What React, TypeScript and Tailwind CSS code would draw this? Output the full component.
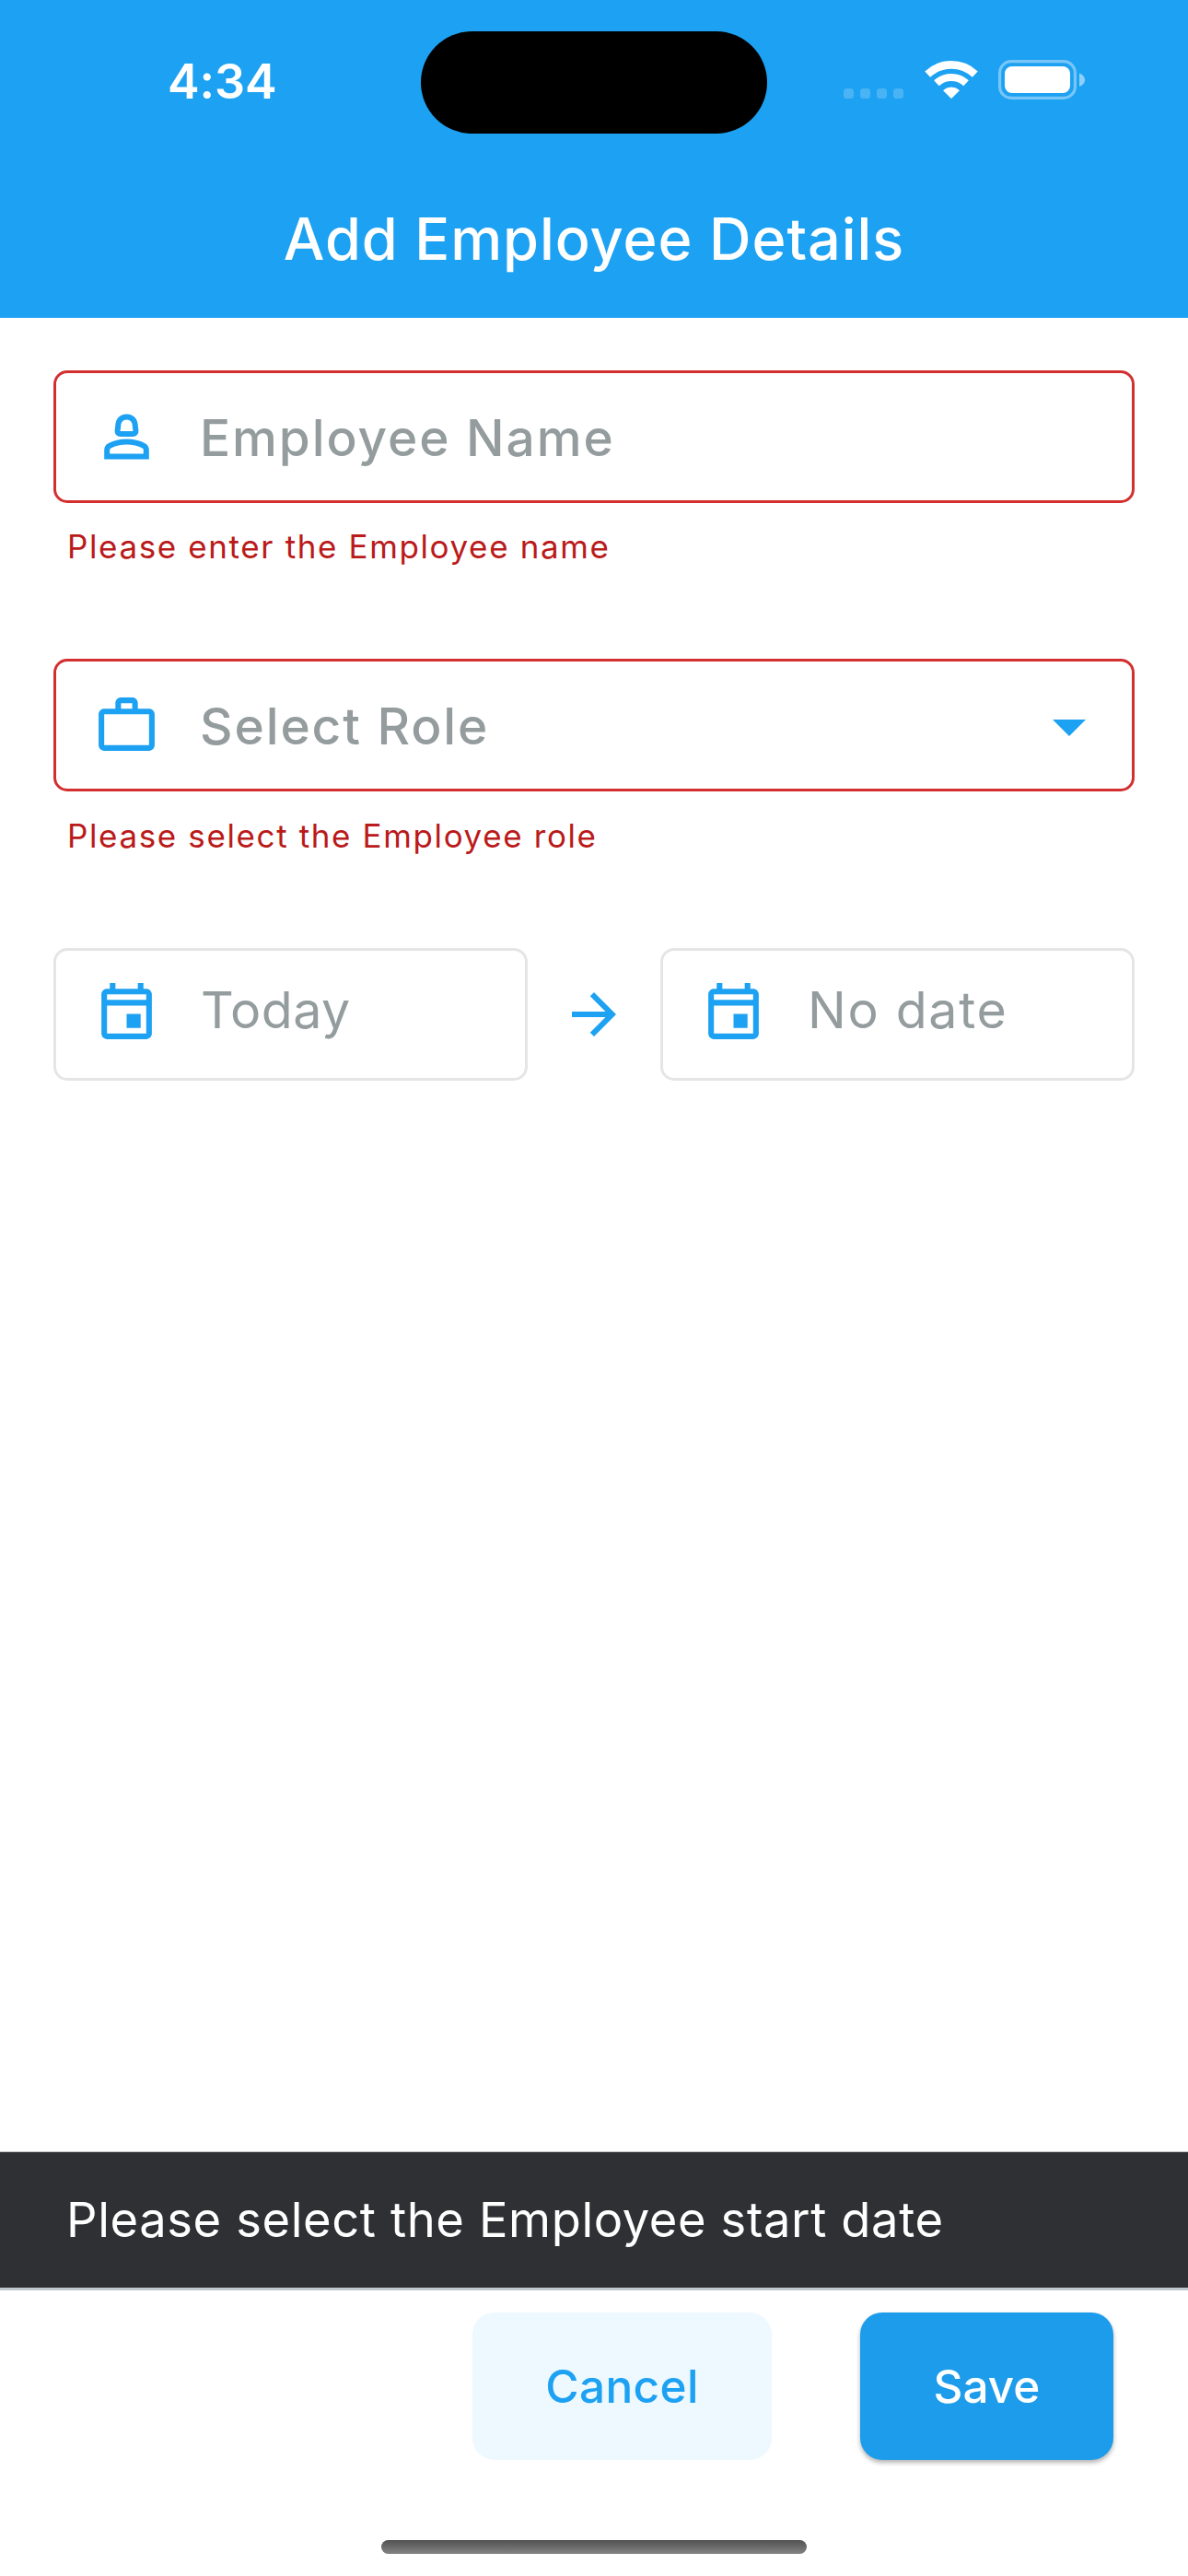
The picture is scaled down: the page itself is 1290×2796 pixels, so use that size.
import type { ReactNode } from "react";

function WifiIcon() {
  return (
    <svg width="58" height="43" viewBox="0 0 58 43" className="block" fill="none" stroke="#fff">
      <path d="M3.2 15.6A37.6 37.6 0 0 1 54.8 15.6" strokeWidth="8.6" />
      <path d="M12.9 25.3A23.7 23.7 0 0 1 45.1 25.3" strokeWidth="8.2" />
      <path
        d="M20.6 33.2A12.6 12.6 0 0 1 37.4 33.2L29 41.6Z"
        fill="#fff"
        strokeWidth="1"
        strokeLinejoin="round"
      />
    </svg>
  );
}

function BatteryIcon() {
  return (
    <svg width="94" height="43" viewBox="0 0 94 43" className="block">
      <rect x="1.6" y="1.6" width="81.8" height="39.8" rx="12.5" fill="none" stroke="#fff" strokeOpacity="0.4" strokeWidth="3.2" />
      <rect x="7" y="7" width="71" height="29" rx="8" fill="#fff" />
      <path d="M88 14.5c3.6 1.4 6 4 6 7.2s-2.4 5.8-6 7.2z" fill="#fff" fillOpacity="0.5" />
    </svg>
  );
}

function PersonIcon() {
  return (
    <svg width="73" height="73" viewBox="0 0 73 73" fill="none" stroke="#1DA1F2" strokeWidth="6" className="block shrink-0">
      <path d="M36.5 14.5c-6 0-9.3 4-9.3 10.5l-.6 4c-.3 2.8 1 4 3.4 4h13c2.4 0 3.7-1.2 3.4-4l-.6-4c0-6.5-3.3-10.5-9.3-10.5z" />
      <path d="M15.2 57.4v-6.9c0-2.100.9-3.700 2.700-4.700c5.600-3 12-4.300 18.600-4.300s13 1.300 18.600 4.300c1.800 1 2.700 2.600 2.700 4.700v6.900z" />
    </svg>
  );
}

function WorkIcon() {
  return (
    <svg width="73" height="73" viewBox="0 0 24 24" fill="#1DA1F2" className="block shrink-0">
      <path
        fillRule="evenodd"
        d="M14 6V4h-4v2h4zM4 8v11h16V8H4zm16-2c1.110 0 2 .89 2 2v11c0 1.110-.89 2-2 2H4c-1.110 0-2-.89-2-2V8c0-1.110.89-2 2-2h4V4c0-1.110.89-2 2-2h4c1.110 0 2 .89 2 2v2h4z"
      />
    </svg>
  );
}

function CalendarIcon() {
  return (
    <svg width="73" height="73" viewBox="0 0 24 24" fill="#1DA1F2" className="block shrink-0">
      <path d="M19 4h-1V2h-2v2H8V2H6v2H5c-1.110 0-2 .9-2 2v14c0 1.100.89 2 2 2h14c1.100 0 2-.9 2-2V6c0-1.100-.9-2-2-2zm0 16H5V10h14v10zm0-12H5V6h14v2zM12 13h5v5h-5z" />
    </svg>
  );
}

function ArrowIcon() {
  return (
    <svg width="72" height="72" viewBox="0 0 24 24" fill="#1DA1F2" className="block">
      <path d="M12 4l-1.410 1.410L16.170 11H4v2h12.170l-5.580 5.590L12 20l8-8z" />
    </svg>
  );
}

function StatusBar() {
  return (
    <div className="flex h-[177px] items-center">
      <div className="w-[457px] pl-[182px] text-[52px] leading-none font-semibold tracking-[-0.1px]">4:34</div>
      <div className="mt-px h-[111px] w-[376px] rounded-full bg-black" />
      <div className="mb-1 flex h-[43px] pl-[83px]">
        <div className="mt-[31px] flex gap-[7px]">
          {[0, 1, 2, 3].map((i) => (
            <span key={i} className="size-[11px] rounded-[3.5px] bg-white/20" />
          ))}
        </div>
        <div className="ml-[23px]">
          <WifiIcon />
        </div>
        <div className="ml-[22px]">
          <BatteryIcon />
        </div>
      </div>
    </div>
  );
}

function Field({ icon, children, trailing }: { icon: ReactNode; children: string; trailing?: ReactNode }) {
  return (
    <div className="flex h-36 items-center rounded-[15px] border-[3px] border-[#D32F2F] pr-[50px] pl-10">
      {icon}
      <span className="mt-0.5 ml-[43px] flex-1 text-[55px] leading-none font-medium tracking-[1.9px] text-[#949C9E]">
        {children}
      </span>
      {trailing}
    </div>
  );
}

function DateField({ children, tracking }: { children: string; tracking: string }) {
  return (
    <div className="flex h-36 w-[515px] items-center rounded-[15px] border-[3px] border-[#E5E5E5] pb-[7px] pl-10">
      <CalendarIcon />
      <span className={`mb-[3px] ml-11 text-[55.5px] leading-none text-[#949C9E] ${tracking}`}>{children}</span>
    </div>
  );
}

function ErrorText({ children }: { children: string }) {
  return <p className="pl-[15px] text-[35px] leading-[45px] tracking-[1.62px] text-[#BA1A1A]">{children}</p>;
}

export default function App() {
  return (
    <div className="flex h-[2796px] w-[1290px] flex-col overflow-hidden bg-white font-[Inter,sans-serif]">
      <header className="h-[345px] bg-[#1DA1F2] text-white">
        <StatusBar />
        <h1 className="text-center text-[63px] leading-[165px] font-medium tracking-[0.92px]">Add Employee Details</h1>
      </header>

      <main className="flex-1 px-[58px] pt-[57px]">
        <Field icon={<PersonIcon />}>Employee Name</Field>
        <div className="mt-[25px] mb-[99px]">
          <ErrorText>Please enter the Employee name</ErrorText>
        </div>
        <Field
          icon={<WorkIcon />}
          trailing={
            <svg width="36" height="18" viewBox="0 0 36 18" className="mt-[5px] block">
              <path d="M0 0h36L18 18z" fill="#1DA1F2" />
            </svg>
          }
        >
          Select Role
        </Field>
        <div className="mt-[26px] mb-[99px]">
          <ErrorText>Please select the Employee role</ErrorText>
        </div>
        <div className="flex items-center justify-between">
          <DateField tracking="tracking-[0.47px]">Today</DateField>
          <ArrowIcon />
          <DateField tracking="tracking-[1.67px]">No date</DateField>
        </div>
      </main>

      <div className="border-t border-t-[#C4C4C4] border-b-[3px] border-b-[#C1C7CE] bg-[#2F3033] pl-[72px] text-[52.5px] leading-[147px] tracking-[0.6px] text-white">
        Please select the Employee start date
      </div>

      <footer className="flex h-[310px] flex-col">
        <div className="flex justify-end gap-24 pt-6 pr-[81px] text-[49.5px] font-medium">
          <button className="h-40 w-[325px] rounded-3xl bg-[#EDF8FF] tracking-[0.37px] text-[#1DA1F2]">Cancel</button>
          <button className="h-40 w-[275px] rounded-3xl bg-[#1C9CEB] text-white shadow-[0_3px_5px_rgba(0,0,0,0.3)]">
            Save
          </button>
        </div>
        <div className="mx-auto mt-auto mb-6 h-[15px] w-[462px] rounded-full bg-linear-to-b from-[#525252] to-[#848484]" />
      </footer>
    </div>
  );
}
